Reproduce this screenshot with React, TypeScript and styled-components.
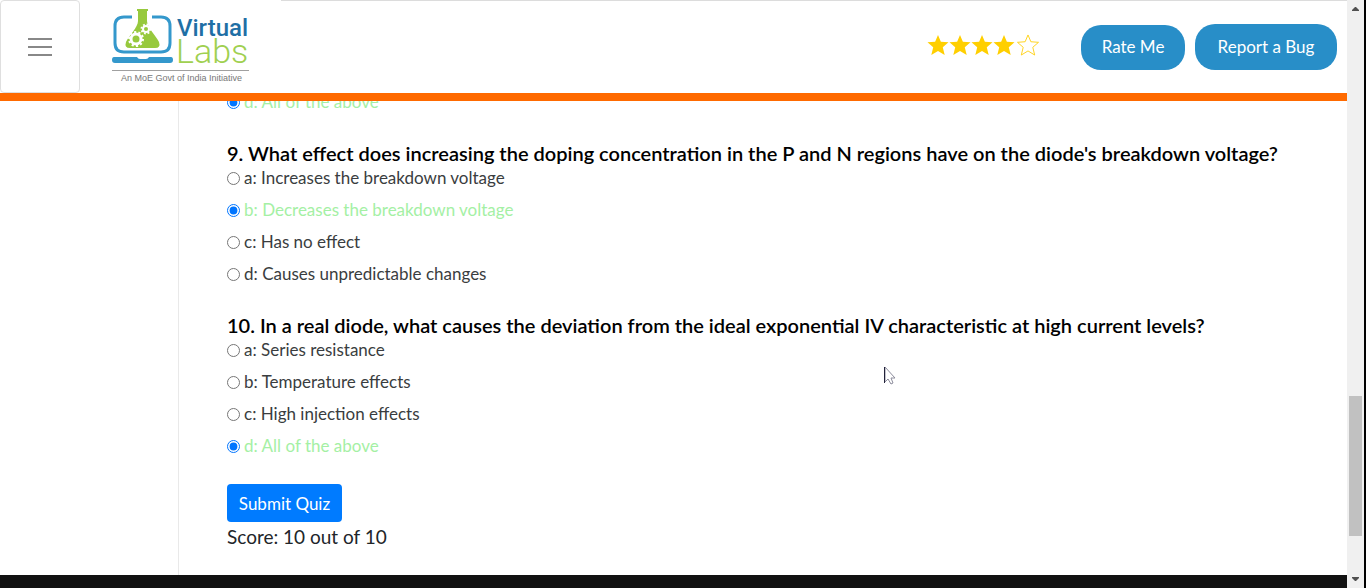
import React from "react";
import styled, { createGlobalStyle } from "styled-components";

const GlobalStyle = createGlobalStyle`
  *, *::before, *::after { box-sizing: border-box; }
  html, body { margin: 0; padding: 0; background: #fff; }
  body {
    font-family: Lato, "Open Sans", sans-serif;
    font-size: 17px;
    line-height: 24px;
    color: #212529;
    overflow: hidden;
  }
`;

const Shell = styled.div`
  display: grid;
  grid-template-columns: minmax(0, 1fr) 19px;
  height: 100vh;
`;

const Page = styled.div`
  display: flex;
  flex-direction: column;
  min-height: 0;
  height: 100vh;
`;

const Header = styled.header`
  flex: none;
  display: flex;
  align-items: flex-start;
  height: 101px;
  border-bottom: 8px solid #ff6a00;
`;

const MenuButton = styled.button`
  display: flex;
  flex-direction: column;
  align-items: center;
  justify-content: center;
  gap: 6px;
  width: 80px;
  height: 93px;
  padding: 0;
  background: #fff;
  border: 1px solid #dfdfdf;
  border-radius: 4px;
`;

const MenuBar = styled.span`
  width: 24px;
  height: 2px;
  background: #888;
`;

const LogoLink = styled.a`
  display: block;
  width: 201px;
  padding: 4px 0 0 30px;
`;

const Actions = styled.div`
  flex: 1;
  display: flex;
  align-items: center;
  justify-content: flex-end;
  gap: 10px;
  height: 93px;
  padding-right: 10px;
  border-top: 1px solid #dcdcdc;
`;

const Stars = styled.div`
  display: flex;
  margin: 0 32px 4px 0;

  svg:last-child {
    margin-left: 2px;
  }
`;

const PillButton = styled.button<{ $wide?: boolean }>`
  width: ${(p) => (p.$wide ? 142 : 104)}px;
  height: ${(p) => (p.$wide ? 46 : 45)}px;
  padding: 0;
  border: 0;
  border-radius: 20px;
  background: #288ec8;
  color: #fff;
  font-family: inherit;
  font-size: 17px;
  line-height: 24px;
`;

const Body = styled.div`
  flex: 1;
  min-height: 0;
  display: flex;
  overflow: hidden;
`;

const Sidebar = styled.aside`
  flex: none;
  width: 179px;
  border-right: 1px solid #e9e9e9;
`;

const Quiz = styled.form`
  flex: 1;
  min-width: 0;
  display: flex;
  flex-direction: column;
  justify-content: flex-end;
  align-items: flex-start;
  padding: 0 0 23px 48px;
`;

const Question = styled.fieldset`
  flex: none;
  margin: 0 0 18px;
  padding: 0;
  border: 0;
  min-width: 0;
`;

const Prompt = styled.legend`
  padding: 0;
  font-size: 20px;
  line-height: 26px;
  font-weight: 600;
  color: #000;
  white-space: nowrap;
`;

const Option = styled.label<{ $correct?: boolean }>`
  display: flex;
  align-items: center;
  gap: 4px;
  margin-bottom: 8px;
  color: ${(p) => (p.$correct ? "#a4f0a4" : "#3a3d40")};
`;

const Radio = styled.input`
  width: 13px;
  height: 13px;
  margin: 0;
`;

const SubmitButton = styled.button`
  flex: none;
  height: 38px;
  width: 115px;
  padding: 0;
  border: 0;
  border-radius: 4px;
  background: #007bff;
  color: #fff;
  font-family: inherit;
  font-size: 17px;
`;

const Score = styled.div`
  flex: none;
  font-size: 19px;
  line-height: 30px;
`;

const Footer = styled.footer`
  flex: none;
  height: 13px;
  background: #111;
`;

const ScrollTrack = styled.div`
  display: flex;
  flex-direction: column;
  align-items: center;
  justify-content: space-between;
  padding: 7px 0 7px;
  background: #f0f0f0;
  border-right: 2px solid #000;
`;

const ScrollRail = styled.div`
  flex: 1;
  display: grid;
  grid-template-rows: 385fr 140fr 41fr;
  width: 13px;
`;

const ScrollThumb = styled.div`
  grid-row: 2;
  background: #c1c1c1;
`;

const Pointer = styled.svg`
  position: absolute;
  left: 884px;
  top: 366px;
`;

const STAR =
  "M11 0.500 L14 7.600 L22 8.200 L16 13.400 L18 21.500 L11 17.200 L4 21.500 L6 13.400 L0 8.200 L8 7.600 Z";

function Star({ filled }: { filled: boolean }) {
  return (
    <svg width="22" height="22" viewBox="-0.500 0 23 22" aria-hidden="true">
      <path d={STAR} fill={filled ? "#ffcf00" : "#fff"} stroke="#ffd21a" strokeWidth={filled ? 0 : 1} />
    </svg>
  );
}

type GearProps = { x: number; y: number; r: number; rim: number; teeth: number };

function Gear({ x, y, r, rim, teeth }: GearProps) {
  const outer = r + rim / 2 + 0.5;
  const step = (Math.PI * outer) / teeth;
  return (
    <g fill="none" stroke="#fff">
      <circle cx={x} cy={y} r={r} strokeWidth={rim} />
      <circle cx={x} cy={y} r={outer} strokeWidth="2" strokeDasharray={`${step} ${step}`} />
    </g>
  );
}

function Logo() {
  return (
    <svg width="140" height="82" viewBox="110 4 140 82" role="img" aria-label="Virtual Labs">
      <path
        d="M132 17H124Q115 17 115 26V43Q115 52 124 52H161Q170 52 170 43V26Q170 17 161 17H152"
        fill="none"
        stroke="#3498cc"
        strokeWidth="3"
      />
      <path
        d="M137 9H148V11H147V21C147 27 156 36 159 42Q161 48 155 48H130Q124 48 126 42C129 36 138 27 138 21V11H137Z"
        fill="#97c93d"
      />
      <Gear x={136} y={39} r={5} rim={3} teeth={10} />
      <Gear x={146} y={29} r={3} rim={2} teeth={8} />
      <path
        d="M114 57H137Q138 59 140 59H146Q148 59 149 57H171Q173 57 173 60Q173 63 170 63H115Q112 63 112 60Q112 57 114 57Z"
        fill="#3498cc"
      />
      <text x="177" y="36" fontFamily="Roboto" fontSize="24" fontWeight="500" fill="#1f6fa5">
        Virtual
      </text>
      <text x="176" y="63" fontFamily="Roboto" fontSize="34" fontWeight="300" fill="#a0d050">
        Labs
      </text>
      <path d="M112 70.500H249" stroke="#a0a0a0" />
      <text x="121" y="81" fontFamily="Liberation Sans" fontSize="9" fill="#777">
        An MoE Govt of India Initiative
      </text>
    </svg>
  );
}

type QuestionData = { id: string; prompt?: string; options: [string, string][]; answer: string };

const QUESTIONS: QuestionData[] = [
  { id: "q8", options: [["d", "All of the above"]], answer: "d" },
  {
    id: "q9",
    prompt:
      "9. What effect does increasing the doping concentration in the P and N regions have on the diode's breakdown voltage?",
    options: [
      ["a", "Increases the breakdown voltage"],
      ["b", "Decreases the breakdown voltage"],
      ["c", "Has no effect"],
      ["d", "Causes unpredictable changes"],
    ],
    answer: "b",
  },
  {
    id: "q10",
    prompt:
      "10. In a real diode, what causes the deviation from the ideal exponential IV characteristic at high current levels?",
    options: [
      ["a", "Series resistance"],
      ["b", "Temperature effects"],
      ["c", "High injection effects"],
      ["d", "All of the above"],
    ],
    answer: "d",
  },
];

export default function App() {
  return (
    <>
      <GlobalStyle />
      <Shell>
        <Page>
          <Header>
            <MenuButton type="button" aria-label="Menu">
              <MenuBar />
              <MenuBar />
              <MenuBar />
            </MenuButton>
            <LogoLink href="#">
              <Logo />
            </LogoLink>
            <Actions>
              <Stars role="img" aria-label="4 out of 5 stars">
                {[1, 2, 3, 4, 5].map((n) => (
                  <Star key={n} filled={n < 5} />
                ))}
              </Stars>
              <PillButton type="button">Rate Me</PillButton>
              <PillButton type="button" $wide>
                Report a Bug
              </PillButton>
            </Actions>
          </Header>
          <Body>
            <Sidebar />
            <Quiz onSubmit={(e) => e.preventDefault()}>
              {QUESTIONS.map((q) => (
                <Question key={q.id}>
                  {q.prompt && <Prompt>{q.prompt}</Prompt>}
                  {q.options.map(([key, text]) => (
                    <Option key={key} $correct={key === q.answer}>
                      <Radio type="radio" name={q.id} value={key} defaultChecked={key === q.answer} />
                      {key}: {text}
                    </Option>
                  ))}
                </Question>
              ))}
              <SubmitButton type="submit">Submit Quiz</SubmitButton>
              <Score>Score: 10 out of 10</Score>
            </Quiz>
          </Body>
          <Footer />
        </Page>
        <ScrollTrack aria-hidden="true">
          <svg width="7" height="4" viewBox="0 0 7 4">
            <path d="M3 0h1l3 3v1H0V3z" fill="#505050" />
          </svg>
          <ScrollRail>
            <ScrollThumb />
          </ScrollRail>
          <svg width="7" height="4" viewBox="0 0 7 4">
            <path d="M0 0h7v1L4 4H3L0 1z" fill="#505050" />
          </svg>
        </ScrollTrack>
      </Shell>
      <Pointer width="13" height="20" viewBox="0 0 13 20" aria-hidden="true">
        <path d="M1 1V16L4 13L7 18L9 17L7 12H11Z" fill="#fff" stroke="#8c8c9c" />
        <path d="M0.500 1V17" stroke="#22223a" />
      </Pointer>
    </>
  );
}
